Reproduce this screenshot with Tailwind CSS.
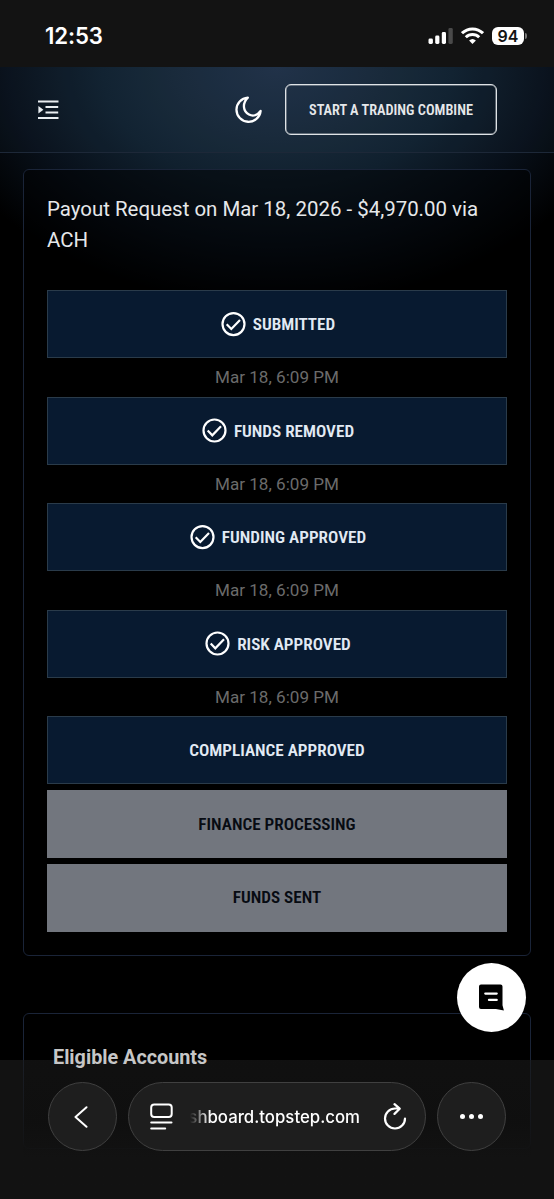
<!DOCTYPE html>
<html lang="en">
<head>
    <meta charset="UTF-8">
    <meta name="viewport" content="width=device-width, initial-scale=1">
    <title>Payout Request</title>
    <script src="https://cdn.jsdelivr.net/npm/@tailwindcss/browser@4"></script>
</head>
<body class="bg-black">
  <div class="relative flex flex-col h-[1199px] w-[554px] overflow-hidden bg-black font-['Roboto',sans-serif] text-[#e6e8ea]">
    <!-- Status bar -->
    <div class="flex h-[67px] shrink-0 items-center justify-between bg-[#131313] pl-[45px] pr-[27px] pt-1 text-white">
      <span class="pt-0.5 font-['Inter',sans-serif] text-[22.2px] font-semibold leading-none tracking-[-0.1px]">12:53</span>
      <div class="flex items-center gap-2">
        <svg class="h-4 w-[25px]" viewBox="0 0 25 16" fill="#fff">
          <rect x="0.5" y="10.5" width="4.4" height="5.5" rx="1.4"/>
          <rect x="7.2" y="7.5" width="4.2" height="8.5" rx="1.4"/>
          <rect x="13.8" y="4" width="4.2" height="12" rx="1.4"/>
          <rect x="20.4" y="0" width="4.4" height="16" rx="1.4" fill="#4a4a4a"/>
        </svg>
        <svg class="h-[17px] w-[23px]" viewBox="0 0 23 17" fill="none" stroke="#fff" stroke-width="3">
          <path d="M1 6.2a15 15 0 0 1 21 0"/>
          <path d="M4.8 10.2a9.6 9.6 0 0 1 13.4 0"/>
          <path d="M11.5 17l-3.4-3.5a5 5 0 0 1 6.8 0z" fill="#fff" stroke="none"/>
        </svg>
        <div class="flex items-center gap-px">
          <div class="flex h-[18px] w-8 items-center justify-center rounded-[6px] bg-white font-['Inter',sans-serif] text-base font-semibold leading-none text-[#131313]">94</div>
          <div class="h-[6px] w-[2px] rounded-r-full bg-[#777]"></div>
        </div>
      </div>
    </div>

    <!-- Page -->
    <div class="flex grow flex-col bg-[radial-gradient(ellipse_350px_240px_at_277px_0px,#203047_0%,#172838_30%,#10202e_50%,#08101a_75%,#000_100%)]">
      <header class="flex h-[86px] shrink-0 items-center border-b-[1.5px] border-[#1d2838] bg-[#33506a]/8 pl-[37px] pr-[57px]">
        <svg class="h-[20px] w-[22px]" viewBox="0 0 22 20" fill="none" stroke="#e9eef2" stroke-width="1.9">
          <path d="M1 1.5h20.5M8.500 7h12.7M8.500 12.5h12.7M1 18h20.5"/>
          <path d="M1.4 6v7.6l5-3.8z" fill="#e9eef2" stroke="none"/>
        </svg>
        <svg class="ml-auto h-[28px] w-[28px]" viewBox="0 0 28 28" fill="none" stroke="#fff" stroke-width="2.3" stroke-linejoin="round">
          <path d="M12.8 1.6A12.1 12.1 0 1 0 25.600 15C22.6 19.3 18 20.6 14 18.500C8 15.300 7 7.500 12.8 1.6Z"/>
        </svg>
        <button class="ml-[22px] flex h-[51px] w-[212px] items-center justify-center rounded-[6px] border-[1.5px] border-[#dfe3e6] pt-0.5 font-['Roboto_Condensed','Roboto',sans-serif] text-[14.3px] font-semibold [font-stretch:75%] shadow-[inset_0_0_0_0.5px_#aab0b6]">START A TRADING COMBINE</button>
      </header>

      <!-- Payout card -->
      <section class="mx-[23px] mt-4 flex h-[787px] shrink-0 flex-col rounded-[6px] border-[1.5px] border-[#1a2438] bg-black/50 px-[23px] pt-[24px]">
        <h1 class="h-[96px] w-[450px] shrink-0 text-[20.45px] leading-[31px]">Payout Request on Mar 18, 2026 - $4,970.00 via ACH</h1>
        <div class="flex flex-col font-['Roboto_Condensed','Roboto',sans-serif] text-[17.15px] font-semibold text-[#e2eaf4] [font-stretch:75%]">
          <div class="flex h-[68px] items-center justify-center gap-[7px] border-[1.5px] border-[#2a3b4a] bg-[#081a30] pl-0.5">
            <svg class="h-[25px] w-[25px]" viewBox="0 0 25 25" fill="none" stroke="#fff" stroke-width="2.2"><circle cx="12.5" cy="12.1" r="11"/><path d="M5.7 12.2l4.6 4.7 8.7-9"/></svg>
            <span class="pt-px">SUBMITTED</span>
          </div>
          <div class="h-[38.6px] text-center text-[17.1px] font-normal leading-[39px] text-[#6b6b6b] [font-stretch:100%] font-['Roboto']">Mar 18, 6:09 PM</div>
          <div class="flex h-[68px] items-center justify-center gap-[7px] border-[1.5px] border-[#2a3b4a] bg-[#081a30] pl-0.5">
            <svg class="h-[25px] w-[25px]" viewBox="0 0 25 25" fill="none" stroke="#fff" stroke-width="2.2"><circle cx="12.5" cy="12.5" r="11"/><path d="M5.7 12.6l4.6 4.7 8.7-9"/></svg>
            <span class="pt-0.5">FUNDS REMOVED</span>
          </div>
          <div class="h-[38.6px] text-center text-[17.1px] font-normal leading-[39px] text-[#6b6b6b] [font-stretch:100%] font-['Roboto']">Mar 18, 6:09 PM</div>
          <div class="flex h-[68px] items-center justify-center gap-[7px] border-[1.5px] border-[#2a3b4a] bg-[#081a30] pl-0.5">
            <svg class="h-[25px] w-[25px]" viewBox="0 0 25 25" fill="none" stroke="#fff" stroke-width="2.2"><circle cx="12.5" cy="12.1" r="11"/><path d="M5.7 12.2l4.6 4.7 8.7-9"/></svg>
            <span class="pt-px">FUNDING APPROVED</span>
          </div>
          <div class="h-[38.6px] text-center text-[17.1px] font-normal leading-[39px] text-[#6b6b6b] [font-stretch:100%] font-['Roboto']">Mar 18, 6:09 PM</div>
          <div class="flex h-[68px] items-center justify-center gap-[7px] border-[1.5px] border-[#2a3b4a] bg-[#081a30] pl-0.5">
            <svg class="h-[25px] w-[25px]" viewBox="0 0 25 25" fill="none" stroke="#fff" stroke-width="2.2"><circle cx="12.5" cy="12.5" r="11"/><path d="M5.7 12.6l4.6 4.7 8.7-9"/></svg>
            <span class="pt-0.5">RISK APPROVED</span>
          </div>
          <div class="h-[38.6px] text-center text-[17.1px] font-normal leading-[39px] text-[#6b6b6b] [font-stretch:100%] font-['Roboto']">Mar 18, 6:09 PM</div>
          <div class="flex h-[68px] items-center justify-center border-[1.5px] border-[#2a3b4a] bg-[#081a30] pt-px"><span>COMPLIANCE APPROVED</span></div>
          <div class="mt-[5.8px] flex h-[68px] items-center justify-center bg-[#72767e] pt-px text-[#070b12]"><span>FINANCE PROCESSING</span></div>
          <div class="mt-[5.8px] flex h-[68px] items-center justify-center bg-[#72767e] text-[#070b12]"><span>FUNDS SENT</span></div>
        </div>
      </section>

      <!-- Accounts card -->
      <section class="mx-[23px] mt-[57px] h-[136px] shrink-0 rounded-[6px] border-[1.5px] border-[#1a2438] bg-black px-[29px] pt-[32px]">
        <h2 class="relative z-10 text-[19.8px] font-bold leading-6 text-[#c6c6c6]">Eligible Accounts</h2>
      </section>
    </div>

    <!-- Chat launcher -->
    <div class="absolute left-[457px] top-[963px] flex h-[69px] w-[69px] items-center justify-center rounded-full bg-white">
      <svg class="h-[27px] w-[27px]" viewBox="0 0 27 27">
        <path d="M3 0.6h19.5a2 2 0 0 1 2 2v18.7l1.4 5.3-8-1.6H3a2 2 0 0 1-2-2V2.6A2 2 0 0 1 3 0.6z" fill="#000"/>
        <path d="M7.3 9.6h11.4M11 15.9h7.7" stroke="#fff" stroke-width="2.3" stroke-linecap="round"/>
      </svg>
    </div>

    <!-- Browser toolbar -->
    <div class="absolute inset-x-0 bottom-0 flex h-[139px]">
      <div class="w-[23px] bg-[#121212]"></div>
      <div class="grow bg-linear-to-b from-[#1b1b1b]/60 via-[#131313]/80 via-45% to-[#121212] to-70%"></div>
      <div class="w-[23px] bg-[#121212]"></div>
    </div>
    <div class="absolute inset-x-0 bottom-[48px] flex h-[69px] items-center gap-[11px] pl-12">
      <div class="flex size-[69px] items-center justify-center rounded-full border border-[#404040] bg-[#1e1e1e]">
        <svg class="mr-1 h-[22px] w-[14px]" viewBox="0 0 14 22" fill="none" stroke="#fff" stroke-width="2" stroke-linecap="round" stroke-linejoin="round"><path d="M12.5 1.2L1.5 11l11 9.8"/></svg>
      </div>
      <div class="flex h-[69px] w-[298px] items-center rounded-full border border-[#404040] bg-[#1e1e1e] pl-[21px] pr-[18px]">
        <svg class="h-[27px] w-[23px] shrink-0" viewBox="0 0 23 27" fill="none" stroke="#fff" stroke-width="2" stroke-linecap="round">
          <rect x="1.2" y="1.5" width="20.5" height="12.5" rx="3"/>
          <path d="M1.2 19.5h20.3M1.2 25.5h14"/>
        </svg>
        <div class="ml-[17px] mt-0.5 flex w-[170px] justify-end whitespace-nowrap font-['Inter',sans-serif] text-[16.8px] font-medium text-white [mask-image:linear-gradient(to_right,transparent,black_20px)]">shboard.topstep.com</div>
        <svg class="ml-auto h-[27px] w-[24px] shrink-0" viewBox="0 0 24 27" fill="none" stroke="#fff" stroke-width="2.2" stroke-linecap="round" stroke-linejoin="round">
          <path d="M22 15.5A10 10 0 1 1 12 5.5h4.5M11.5 1.2l5.2 4.5-5.2 5.2"/>
        </svg>
      </div>
      <div class="flex size-[69px] items-center justify-center gap-1 rounded-full border border-[#404040] bg-[#1e1e1e]">
        <div class="size-[5px] rounded-full bg-white"></div>
        <div class="size-[5px] rounded-full bg-white"></div>
        <div class="size-[5px] rounded-full bg-white"></div>
      </div>
    </div>
  </div>
</body>
</html>
